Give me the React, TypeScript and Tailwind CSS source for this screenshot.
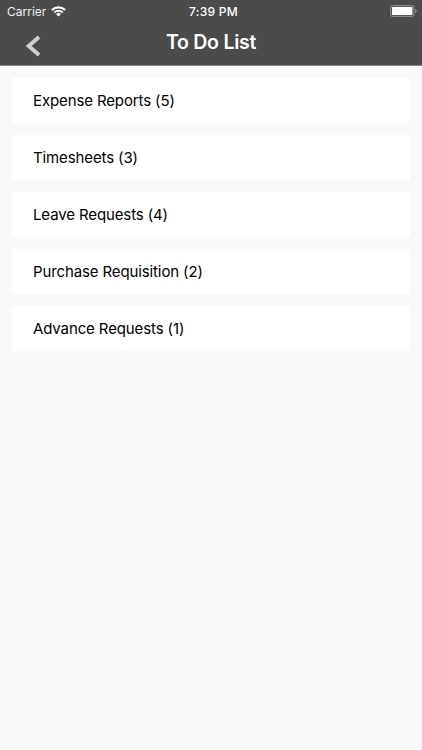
const todoItems = [
    { label: "Expense Reports", count: 5 },
    { label: "Timesheets", count: 3 },
    { label: "Leave Requests", count: 4 },
    { label: "Purchase Requisition", count: 2 },
    { label: "Advance Requests", count: 1 },
];

const WifiIcon = () => (
    <svg width="15" height="11" viewBox="0 0 15 11" fill="none" stroke="#fff" strokeWidth="2.1">
        <path d="M0.9 4.1a9.4 9.4 0 0 1 13.2 0" />
        <path d="M3.3 6.5a6 6 0 0 1 8.4 0" />
        <path d="M7.5 10.6L5 8.1a3.6 3.6 0 0 1 5 0z" fill="#fff" stroke="none" />
    </svg>
);

const BatteryIcon = () => (
    <svg width="27" height="12" viewBox="0 0 27 12" fill="none">
        <rect x="0.6" y="0.6" width="23.3" height="10.8" rx="2.5" stroke="#8c8c8c" strokeWidth="1.1" />
        <rect x="2" y="2" width="20.4" height="8" rx="0.9" fill="#fff" />
        <path d="M25.2 4v4c1-.4 1.5-1.1 1.5-2s-.5-1.6-1.5-2z" fill="#8c8c8c" />
    </svg>
);

const StatusBar = () => (
    <div className="grid h-[22px] grid-cols-3 items-center pl-[7px] pr-[5px] text-[12px] leading-none">
        <div className="flex items-center gap-[5px]">
            <span className="pt-px text-[#f0f0f0]">Carrier</span>
            <WifiIcon />
        </div>
        <span className="pl-[3px] pt-px text-center font-medium tracking-[0.25px]">7:39 PM</span>
        <div className="flex justify-end">
            <BatteryIcon />
        </div>
    </div>
);

export default function App() {
    return (
        <div className="flex min-h-screen flex-col bg-[#f9f9f9] font-['Inter',sans-serif]">
            <header className="h-[66px] border-b border-[#858385] bg-[#4b4b4b] text-white">
                <StatusBar />
                <div className="grid h-[42px] grid-cols-[60px_1fr_60px] items-center">
                    <button type="button" aria-label="Back" className="pl-[25px] pt-[6px]">
                        <svg width="16" height="22" viewBox="0 0 16 22" fill="none" stroke="#cfcfcf" strokeWidth="4">
                            <path d="M14 2L3.7 11L14 20" />
                        </svg>
                    </button>
                    <h1 className="text-center text-[19.5px] font-semibold leading-none tracking-[-0.25px]">
                        To Do List
                    </h1>
                </div>
            </header>
            <ul className="flex flex-col gap-3 p-3">
                {todoItems.map((item) => (
                    <li
                        key={item.label}
                        className="flex h-[45px] items-center bg-white px-[21px] pt-px text-[15px] tracking-[-0.12px] text-black"
                    >
                        {item.label} ({item.count})
                    </li>
                ))}
            </ul>
        </div>
    );
}
